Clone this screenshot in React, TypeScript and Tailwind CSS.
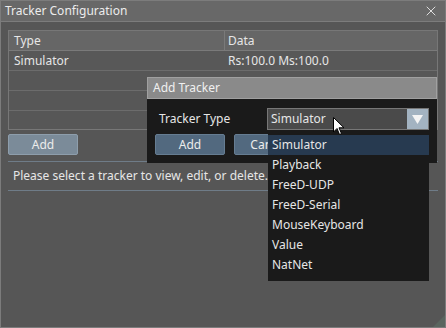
import { X } from 'lucide-react';

const font = { fontFamily: '"Noto Sans", "Open Sans", sans-serif' };

const trackerTypes = ['Simulator', 'Playback', 'FreeD-UDP', 'FreeD-Serial', 'MouseKeyboard', 'Value', 'NatNet'];

export default function App() {
  return (
    <div
      style={font}
      className="relative w-[446px] h-[328px] overflow-hidden bg-[#565656] border border-[#7c7c7c] text-[12px] text-[#e6e6e6] leading-none"
    >
      {/* title bar */}
      <div className="h-[21px] bg-[#686868] border-b border-[#7c7c7c] flex items-center justify-between pl-[4px] pr-[6px]">
        <span className="text-[12px] text-[#ececec]">Tracker Configuration</span>
        <X className="w-[16px] h-[16px] text-[#f0f0f0]" strokeWidth={1.3} />
      </div>

      <div className="px-[7px] pt-[8px]">
        {/* table */}
        <div className="h-[100px] border border-[#777777] bg-[#575757]">
          <div className="h-[20px] grid grid-cols-[216px_1fr] bg-[#666666] border-b border-[#7a7a7a]">
            <div className="flex items-center pl-[5px] border-r border-[#7a7a7a]">Type</div>
            <div className="flex items-center pl-[3px]">Data</div>
          </div>
          <div className="h-[20px] grid grid-cols-[216px_1fr] bg-[#585858] border-b border-[#6c6c6c]">
            <div className="flex items-center pl-[5px]">Simulator</div>
            <div className="flex items-center pl-[3px]">Rs:100.0 Ms:100.0</div>
          </div>
          <div className="h-[20px] border-b border-[#6c6c6c]" />
          <div className="h-[20px] border-b border-[#6c6c6c]" />
        </div>

        <button className="mt-[4px] w-[70px] h-[21px] rounded-[2px] bg-[#7b8b99] border border-[#8e9eac] text-[#ececec] flex items-center justify-center">
          Add
        </button>

        <div className="mt-[6px] border-t border-[#6f7c88]" />
        <div className="h-[28px] flex items-center pl-[5px]">Please select a tracker to view, edit, or delete.</div>
        <div className="border-t border-[#6f7c88]" />
      </div>

      {/* Add Tracker dialog */}
      <div className="absolute left-[146px] top-[76px] w-[290px]">
        <div className="h-[22px] bg-[#8a8a8a] border border-[#a0a0a0] flex items-center pl-[5px] text-[12px] text-[#f0f0f0]">
          Add Tracker
        </div>
        <div className="h-[64px] bg-[#1a1a1a] px-[8px] pt-[9px]">
          <div className="flex items-center h-[22px]">
            <span className="w-[112px] pl-[4px]">Tracker Type</span>
            <div className="flex-1 h-[22px] bg-[#4a4a4a] border border-[#777777] flex items-center justify-between">
              <span className="pl-[3px]">Simulator</span>
              <div className="w-[21px] h-full bg-[#a3b3c1] flex items-center justify-center">
                <svg width="11" height="9" viewBox="0 0 11 9">
                  <path d="M0 0 H11 L5.5 9 Z" fill="#f4f4f4" />
                </svg>
              </div>
            </div>
          </div>
          <div className="flex gap-[9px] mt-[4px]">
            <button className="w-[70px] h-[21px] rounded-[2px] bg-[#52697f] border border-[#667d92] text-[#ececec] flex items-center justify-center">
              Add
            </button>
            <button className="w-[70px] h-[21px] rounded-[2px] bg-[#52697f] border border-[#667d92] text-[#ececec] flex items-center justify-center">
              Cancel
            </button>
          </div>
        </div>
      </div>

      {/* combo popup */}
      <div className="absolute left-[267px] top-[131px] w-[161px] h-[149px] bg-[#1a1a1a] pt-[3px]">
        {trackerTypes.map((t, i) => (
          <div
            key={t}
            className={`h-[20px] flex items-center pl-[4px] ${i === 0 ? 'bg-[#273a50]' : ''}`}
          >
            {t}
          </div>
        ))}
      </div>

      {/* mouse cursor */}
      <svg className="absolute left-[332px] top-[116px]" width="13" height="19" viewBox="0 0 13 19">
        <path d="M0.5 0.5 L0.5 15 L4 11.5 L6.5 17.5 L8.5 16.6 L6 10.8 L11 10.8 Z" fill="#ffffff" stroke="#000000" strokeWidth="1" />
      </svg>

      {/* resize grip */}
      <svg className="absolute right-0 bottom-0" width="12" height="12" viewBox="0 0 12 12">
        <path d="M12 0 L12 12 L0 12 Z" fill="#5e7467" opacity="0.5" />
      </svg>
    </div>
  );
}
